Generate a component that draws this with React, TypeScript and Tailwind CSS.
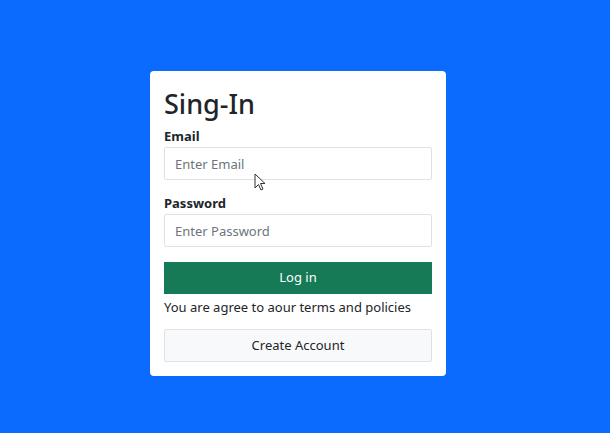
export default function App() {
  return (
    <div
      className="w-full h-[433px] bg-[#0a6bfe] flex justify-center pt-[71px] pr-[14px]"
      style={{ fontFamily: '"Noto Sans", "Open Sans", sans-serif' }}
    >
      <div className="relative w-[296px] h-[305px] bg-white rounded-[4px] px-[14px] pt-[14px]">
        <h2 className="text-[27px] leading-[38px] font-medium text-[#212529] mb-[4px]">Sing-In</h2>
        <form onSubmit={(e) => e.preventDefault()}>
          <div className="mb-[14px]">
            <label className="block text-[13px] leading-[18px] font-bold text-[#212529] mb-[2px]">Email</label>
            <input
              type="email"
              placeholder="Enter Email"
              className="w-full h-[33px] border border-[#dee2e6] rounded-[2px] px-[10px] text-[13px] text-[#212529] placeholder:text-[#6c757d] outline-none"
            />
          </div>
          <div className="mb-[15px]">
            <label className="block text-[13px] leading-[18px] font-bold text-[#212529] mb-[2px]">Password</label>
            <input
              type="password"
              placeholder="Enter Password"
              className="w-full h-[33px] border border-[#dee2e6] rounded-[2px] px-[10px] text-[13px] text-[#212529] placeholder:text-[#6c757d] outline-none"
            />
          </div>
          <button
            type="submit"
            className="w-full h-[32px] bg-[#157a55] text-white text-[13px] rounded-none"
          >
            Log in
          </button>
          <p className="text-[13px] leading-[20px] text-[#212529] mt-[3px]">You are agree to aour terms and policies</p>
          <button
            type="button"
            className="w-full h-[33px] mt-[12px] bg-[#f8f9fa] border border-[#dee2e6] text-[#212529] text-[13px] rounded-[2px]"
          >
            Create Account
          </button>
        </form>
        <svg className="absolute left-[104px] top-[102px]" width="12" height="18" viewBox="0 0 12 18">
          <path d="M1 1 L1 15 L4.5 11.5 L7 17 L9 16 L6.5 10.5 L11 10.5 Z" fill="white" stroke="#333" strokeWidth="1" strokeLinejoin="round" />
        </svg>
      </div>
    </div>
  );
}
